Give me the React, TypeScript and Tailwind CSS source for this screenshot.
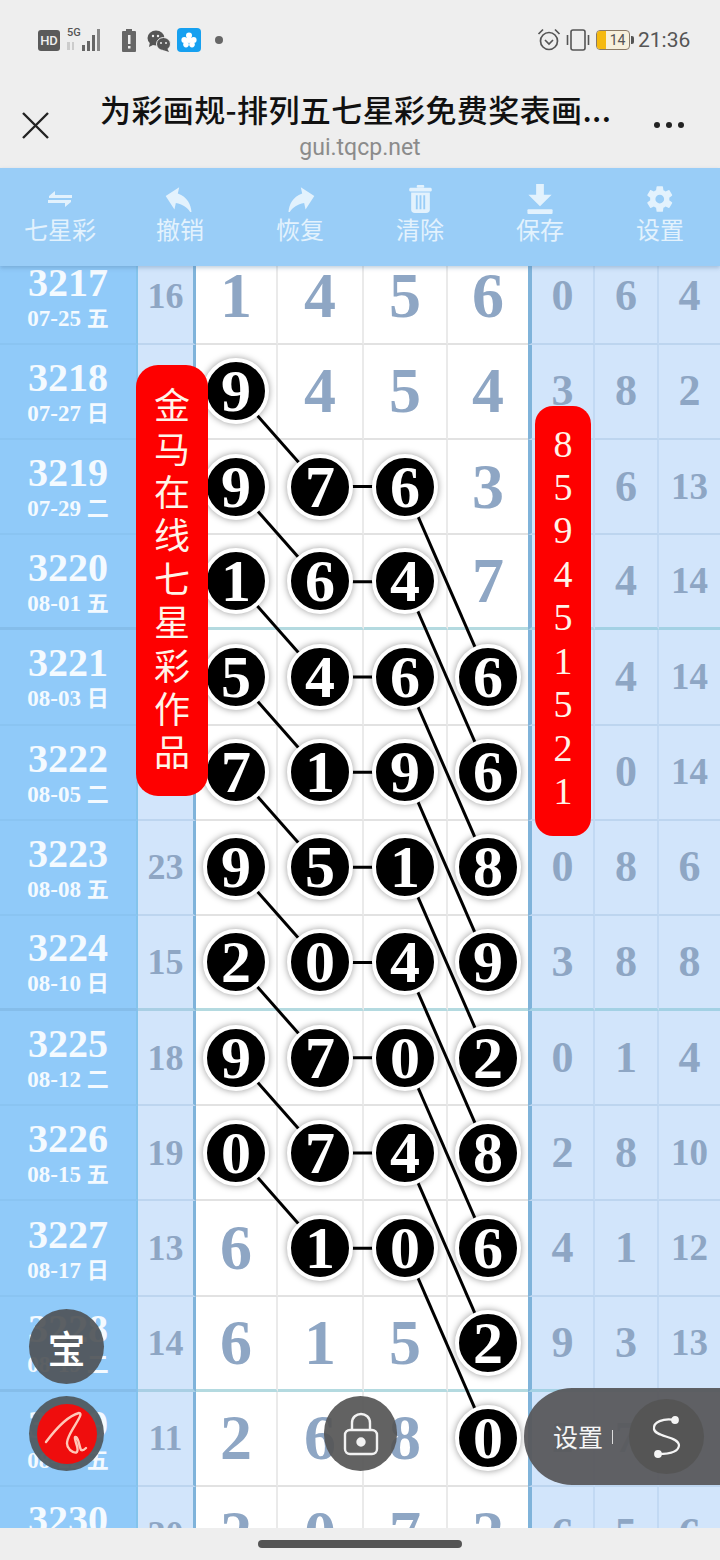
import { Fragment } from 'react'

const WEEK_ROWS = [
  { no: '3217', date: '07-25', day: '五', count: '16', main: [1, 4, 5, 6], right: ['0', '6', '4'] },
  { no: '3218', date: '07-27', day: '日', count: '', main: ['b9', 4, 5, 4], right: ['3', '8', '2'] },
  { no: '3219', date: '07-29', day: '二', count: '', main: ['b9', 'b7', 'b6', 3], right: ['', '6', '13'] },
  { no: '3220', date: '08-01', day: '五', count: '', main: ['b1', 'b6', 'b4', 7], right: ['', '4', '14'], thick: true },
  { no: '3221', date: '08-03', day: '日', count: '', main: ['b5', 'b4', 'b6', 'b6'], right: ['', '4', '14'] },
  { no: '3222', date: '08-05', day: '二', count: '', main: ['b7', 'b1', 'b9', 'b6'], right: ['', '0', '14'] },
  { no: '3223', date: '08-08', day: '五', count: '23', main: ['b9', 'b5', 'b1', 'b8'], right: ['0', '8', '6'] },
  { no: '3224', date: '08-10', day: '日', count: '15', main: ['b2', 'b0', 'b4', 'b9'], right: ['3', '8', '8'], thick: true },
  { no: '3225', date: '08-12', day: '二', count: '18', main: ['b9', 'b7', 'b0', 'b2'], right: ['0', '1', '4'] },
  { no: '3226', date: '08-15', day: '五', count: '19', main: ['b0', 'b7', 'b4', 'b8'], right: ['2', '8', '10'] },
  { no: '3227', date: '08-17', day: '日', count: '13', main: [6, 'b1', 'b0', 'b6'], right: ['4', '1', '12'] },
  { no: '3228', date: '08-19', day: '二', count: '14', main: [6, 1, 5, 'b2'], right: ['9', '3', '13'], thick: true },
  { no: '3229', date: '08-22', day: '五', count: '11', main: [2, 6, 8, 'b0'], right: ['2', '7', '9'] },
  { no: '3230', date: '08-24', day: '日', count: '20', main: [2, 0, 7, 2], right: ['6', '5', '6'] },
]

const COLS = [236, 320, 405, 488]
// y of the ball centres, measured from the top of the table
const rowY = (i: number) => 125.35 + (i - 1) * 95.2

function Ball({ n }: { n: string }) {
  return (
    <div className="relative z-20 flex h-[66px] w-[66px] items-center justify-center rounded-full border-[4px] border-white bg-black text-[60px] font-bold leading-none text-white shadow-[0_0_7px_rgba(0,0,0,0.4)]">
      {n}
    </div>
  )
}

function Lines() {
  const segs: number[][] = []
  for (let i = 1; i <= 9; i++) segs.push([COLS[0], rowY(i), COLS[1], rowY(i + 1)])
  for (let i = 2; i <= 10; i++) segs.push([COLS[1], rowY(i), COLS[2], rowY(i)])
  for (let i = 2; i <= 10; i++) segs.push([COLS[2], rowY(i), COLS[3], rowY(i + 2)])
  return (
    <svg className="absolute left-0 top-0 z-10" width="720" height="1340">
      {segs.map((s, i) => (
        <line key={i} x1={s[0]} y1={s[1]} x2={s[2]} y2={s[3]} stroke="#000" strokeWidth="3" />
      ))}
    </svg>
  )
}

function StatusBar() {
  return (
    <div className="relative h-[72px]">
      <div className="absolute left-[38px] top-[30px] flex h-[21px] w-[22px] items-center justify-center rounded-[3px] bg-[#5a5a5a] font-['Roboto',sans-serif] text-[13px] font-medium leading-none text-[#eee]">HD</div>
      <div className="absolute left-[67px] top-[27px] font-['Roboto',sans-serif] text-[11px] font-medium leading-none text-[#555]">5G</div>
      <svg className="absolute left-[66px] top-[28px]" width="40" height="24" fill="#666">
        <rect x="1" y="14" width="3" height="8" fill="#ccc" />
        <rect x="6" y="14" width="2" height="8" fill="#ccc" />
        <rect x="16" y="17" width="3" height="6" />
        <rect x="21" y="13" width="3" height="10" />
        <rect x="26" y="7" width="3" height="16" />
        <rect x="31" y="1" width="3" height="22" fill="#888" />
      </svg>
      <svg className="absolute left-[122px] top-[29px]" width="14" height="23">
        <rect x="4" y="0" width="6" height="2" fill="#666" />
        <rect x="0" y="2" width="14" height="21" rx="1" fill="#666" />
        <rect x="6" y="6" width="2.5" height="9" fill="#eee" />
        <rect x="6" y="17" width="2.5" height="2.5" fill="#eee" />
      </svg>
      <svg className="absolute left-[147px] top-[30px]" width="24" height="22" fill="#555">
        <ellipse cx="9" cy="8" rx="8.5" ry="7.5" />
        <path d="M3 12 L2 17 L8 14Z" />
        <ellipse cx="16.5" cy="14" rx="7" ry="6.5" stroke="#eee" strokeWidth="1" />
        <path d="M20 18 L22 22 L16 20Z" />
        <circle cx="6" cy="6" r="1.2" fill="#eee" />
        <circle cx="11" cy="6" r="1.2" fill="#eee" />
        <circle cx="14" cy="13" r="1" fill="#eee" />
        <circle cx="19" cy="13" r="1" fill="#eee" />
      </svg>
      <div className="absolute left-[177px] top-[28px] flex h-[24px] w-[24px] items-center justify-center rounded-[4px] bg-[#16a0f0]">
        <svg width="16" height="16" viewBox="0 0 16 16" fill="#fff">
          <circle cx="8" cy="3.6" r="3" />
          <circle cx="3.4" cy="8" r="3" />
          <circle cx="12.6" cy="8" r="3" />
          <circle cx="5" cy="12.6" r="2.8" />
          <circle cx="11" cy="12.6" r="2.8" />
          <circle cx="8" cy="8" r="3" />
        </svg>
      </div>
      <div className="absolute left-[215px] top-[36px] h-[8px] w-[8px] rounded-full bg-[#666]" />

      <svg className="absolute left-[537px] top-[27px]" width="24" height="26" fill="none" stroke="#555" strokeWidth="1.7">
        <circle cx="12" cy="14" r="8.5" />
        <path d="M8 13 L12 17 L16 13" />
        <path d="M1.5 7 L6 2.5 M22.5 7 L18 2.5" />
      </svg>
      <svg className="absolute left-[565px] top-[29px]" width="26" height="22" fill="none" stroke="#555" strokeWidth="1.6">
        <rect x="6" y="1" width="14" height="20" rx="2" />
        <path d="M2.5 6 V16 M23.5 6 V16" />
      </svg>
      <div className="absolute left-[596px] top-[30px] flex h-[20px] w-[34px] items-center overflow-hidden rounded-[4px] border border-[#8a7a66] bg-[#f7f0dc]">
        <div className="h-full w-[9px] bg-[#f5b90f]" />
        <div className="flex-1 text-center font-['Roboto',sans-serif] text-[14px] leading-none text-[#555]">14</div>
      </div>
      <div className="absolute left-[631px] top-[36px] h-[8px] w-[3px] rounded-r-[2px] bg-[#555]" />
      <div className="absolute left-[638px] top-[28px] font-['Roboto',sans-serif] text-[21px] leading-[25px] text-[#555]">21:36</div>
    </div>
  )
}

function TitleBar() {
  return (
    <div className="relative h-[96px]">
      <svg className="absolute left-[22px] top-[40px]" width="27" height="27" stroke="#222" strokeWidth="2.4">
        <path d="M1 1 L26 26 M26 1 L1 26" />
      </svg>
      <div className="absolute left-[100px] top-[17px] w-[530px] whitespace-nowrap font-['Noto_Sans_CJK_SC',sans-serif] text-[31px] font-medium leading-[40px] tracking-[0.4px] text-[#111]">
        为彩画规-排列五七星彩免费奖表画...
      </div>
      <div className="absolute left-0 top-[61px] w-full text-center font-['Roboto',sans-serif] text-[23px] leading-[30px] text-[#8b8b8b]">
        gui.tqcp.net
      </div>
      <div className="absolute left-[654px] top-[50px] flex gap-[6px]">
        <span className="h-[6px] w-[6px] rounded-full bg-[#222]" />
        <span className="h-[6px] w-[6px] rounded-full bg-[#222]" />
        <span className="h-[6px] w-[6px] rounded-full bg-[#222]" />
      </div>
    </div>
  )
}

const TOOLS: { label: string; icon: React.ReactNode }[] = [
  {
    label: '七星彩',
    icon: (
      <svg width="24" height="16" viewBox="0 0 24 16" fill="#e3f2fd">
        <path d="M7 0 L1 5 V7 H24 V4 H7Z" />
        <path d="M17 16 L23 11 V9 H0 V12 H17Z" />
      </svg>
    ),
  },
  {
    label: '撤销',
    icon: (
      <svg width="32" height="26" viewBox="3 4 18 16" fill="#e3f2fd">
        <path d="M10 9V5l-7 7 7 7v-4.1c5 0 8.5 1.6 11 5.1-1-5-4-10-11-11z" transform="rotate(12 12 12)" />
      </svg>
    ),
  },
  {
    label: '恢复',
    icon: (
      <svg width="32" height="26" viewBox="3 4 18 16" fill="#e3f2fd">
        <path d="M14 9V5l7 7-7 7v-4.1c-5 0-8.5 1.6-11 5.1 1-5 4-10 11-11z" transform="rotate(-12 12 12)" />
      </svg>
    ),
  },
  {
    label: '清除',
    icon: (
      <svg width="25" height="28" viewBox="0 0 24 30" fill="#e3f2fd">
        <rect x="8" y="0" width="8" height="3" rx="1" />
        <rect x="0" y="3" width="24" height="4" rx="1.5" />
        <path d="M2 8 H22 V26 Q22 30 18 30 H6 Q2 30 2 26Z" />
        <rect x="7" y="11" width="2" height="15" fill="#99cdf7" />
        <rect x="11" y="11" width="2" height="15" fill="#99cdf7" />
        <rect x="15" y="11" width="2" height="15" fill="#99cdf7" />
      </svg>
    ),
  },
  {
    label: '保存',
    icon: (
      <svg width="28" height="30" viewBox="0 0 28 31" fill="#e3f2fd">
        <path d="M10 0 H18 V11 H26 L14 23 L2 11 H10Z" />
        <rect x="1" y="26" width="26" height="5" rx="1" />
      </svg>
    ),
  },
  {
    label: '设置',
    icon: (
      <svg width="30" height="30" viewBox="0 0 24 24" fill="#e3f2fd">
        <path
          fillRule="evenodd"
          d="M19.4 13c.04-.32.06-.66.06-1s-.02-.68-.07-1l2.17-1.69c.2-.15.25-.42.13-.64l-2.05-3.55c-.13-.23-.39-.3-.62-.23l-2.55 1.03c-.53-.41-1.1-.74-1.73-1L14.35 2.2c-.04-.24-.25-.42-.5-.42h-4.1c-.25 0-.46.18-.5.42l-.39 2.71c-.62.26-1.2.6-1.73 1L4.58 4.88c-.23-.08-.49 0-.62.23L1.91 8.66c-.13.22-.07.49.13.64L4.2 11c-.05.32-.08.66-.08 1s.03.68.08 1l-2.16 1.69c-.2.15-.26.42-.13.64l2.05 3.55c.13.23.39.3.62.23l2.55-1.03c.53.41 1.1.74 1.73 1l.39 2.71c.04.24.25.42.5.42h4.1c.25 0 .46-.18.5-.42l.39-2.71c.62-.26 1.2-.6 1.73-1l2.55 1.03c.23.08.49 0 .62-.23l2.05-3.55c.12-.22.07-.49-.13-.64L19.4 13zM11.8 15.5a3.5 3.5 0 1 1 0-7 3.5 3.5 0 0 1 0 7z"
        />
      </svg>
    ),
  },
]

function Toolbar() {
  return (
    <div className="relative z-30 grid h-[98px] grid-cols-6 bg-[#99cdf7] shadow-[0_2px_4px_rgba(80,120,160,0.35)]">
      {TOOLS.map((t) => (
        <div key={t.label} className="flex flex-col items-center pt-[15px]">
          <div className="flex h-[32px] items-center justify-center">{t.icon}</div>
          <div className="font-['Noto_Sans_CJK_SC',sans-serif] text-[24px] leading-[28px] text-[#e3f2fd]">{t.label}</div>
        </div>
      ))}
    </div>
  )
}

function Table() {
  return (
    <div className="relative h-[1262px] overflow-hidden font-['Liberation_Serif','Noto_Sans_CJK_SC',serif] font-bold">
      <div className="mt-[-16.45px] grid grid-cols-[138px_58px_82px_86px_84px_80px_67px_64px_61px]">
        {WEEK_ROWS.map((r) => {
          const line = r.thick ? 'border-b-[3px]' : 'border-b-2'
          return (
            <Fragment key={r.no}>
              <div className={`flex h-[95.2px] flex-col items-center justify-center border-r-2 border-r-[#84c4ec] bg-[#90caf9] pt-[2px] text-[#f4faff] ${line} ${r.thick ? 'border-b-[#85bdea]' : 'border-b-[#8ac4f2]'}`}>
                <div className="text-[40px] leading-[42px]">{r.no}</div>
                <div className="mt-[1px] whitespace-nowrap text-[23px] leading-[28px]">
                  {r.date} <span className="text-[22px]">{r.day}</span>
                </div>
              </div>
              <div className={`flex h-[95.2px] items-center justify-center border-r-[3px] border-r-[#7fb3da] bg-[#d2e5fb] text-[36px] text-[#8ea6c4] ${line} ${r.thick ? 'border-b-[#a9cfe4]' : 'border-b-[#bdd5ef]'}`}>
                {r.count}
              </div>
              {r.main.map((m, j) => (
                <div
                  key={j}
                  className={`flex h-[95.2px] items-center justify-center bg-white text-[64px] text-[#8ea6c4] ${line} ${j < 3 ? 'border-r-2 border-r-[#eaeaea]' : ''} ${r.thick ? 'border-b-[#b4dae0]' : 'border-b-[#e2e2e2]'}`}
                >
                  {typeof m === 'string' ? <Ball n={m.slice(1)} /> : m}
                </div>
              ))}
              {r.right.map((v, j) => (
                <div
                  key={j}
                  className={`flex h-[95.2px] items-center justify-center bg-[#d2e5fb] text-[#8ea6c4] ${v.length > 1 ? 'text-[37px]' : 'text-[44px]'} ${j === 0 ? 'border-l-4 border-l-[#7fb3da]' : ''} ${j < 2 ? 'border-r-2 border-r-[#c2d9f3]' : ''} ${line} ${r.thick ? 'border-b-[#a3d1e4]' : 'border-b-[#bdd5ef]'}`}
                >
                  {v}
                </div>
              ))}
            </Fragment>
          )
        })}
      </div>
      <Lines />

      {/* floating label, left */}
      <div className="absolute left-[136px] top-[99px] z-30 flex h-[431px] w-[72px] flex-col items-center justify-center rounded-[22px] bg-[#fe0000] pb-[6px] font-['Noto_Sans_CJK_SC',sans-serif] text-[36px] font-normal leading-[43.4px] text-[#fff4e8]">
        {'金马在线七星彩作品'.split('').map((c, i) => (
          <span key={i}>{c}</span>
        ))}
      </div>
      {/* floating label, right */}
      <div className="absolute left-[535px] top-[140px] z-30 flex h-[430px] w-[56px] flex-col items-center justify-center rounded-[18px] bg-[#fe0000] pb-[6px] text-[38px] font-normal leading-[43.4px] text-[#fff4e8]">
        {'859451521'.split('').map((c, i) => (
          <span key={i}>{c}</span>
        ))}
      </div>

      {/* floating buttons */}
      <div className="absolute left-[29px] top-[1043px] z-30 flex h-[75px] w-[75px] items-center justify-center rounded-full bg-[rgba(80,84,88,0.93)] font-['Noto_Sans_CJK_SC',sans-serif] text-[38px] font-medium text-white">
        宝
      </div>
      <div className="absolute left-[29px] top-[1130px] z-30 flex h-[75px] w-[75px] items-center justify-center rounded-full bg-[rgba(80,90,96,0.95)]">
        <div className="flex h-[60px] w-[60px] items-center justify-center rounded-full bg-[#ef0d0d]">
          <svg width="60" height="60" viewBox="0 0 60 60" fill="none" stroke="#ffc8b8" strokeWidth="2.4" strokeLinecap="round" strokeLinejoin="round">
            <path d="M9 38 C18 26 30 12 42 9 C47 9 38 20 33 30 C29 38 29 42 33 46 C38 50 42 50 40 42 C38 36 37 32 39 33 C42 35 42 42 44 46 C46 47 48 45 49 44" />
          </svg>
        </div>
      </div>
      <div className="absolute left-[324px] top-[1130px] z-30 flex h-[75px] w-[73px] items-center justify-center rounded-full bg-[rgba(85,85,85,0.92)]">
        <svg width="36" height="44" viewBox="0 0 36 44" fill="none" stroke="#f2f2f2" strokeWidth="2.4">
          <rect x="2" y="18" width="32" height="24" rx="5" />
          <path d="M9 18 V11 C9 -1 27 -1 27 11 V18" />
          <circle cx="18" cy="30" r="3.5" fill="#f2f2f2" />
        </svg>
      </div>
      <div className="absolute left-[524px] top-[1122px] z-30 flex h-[97px] w-[196px] items-center rounded-l-[48px] bg-[rgba(88,88,92,0.95)]">
        <span className="ml-[29px] font-['Noto_Sans_CJK_SC',sans-serif] text-[25px] font-normal leading-none text-[#f5f5f5]">设置</span>
        <span className="ml-[9px] h-[14px] w-[1px] bg-[#ddd]" />
        <div className="ml-[16px] flex h-[75px] w-[75px] items-center justify-center rounded-full bg-[#555]">
          <svg width="32" height="42" viewBox="0 0 32 42" fill="none" stroke="#f5f5f5" strokeWidth="2.2" strokeLinecap="round">
            <path d="M24 4 C12 2 2 6 3 13 C4 21 27 20 28 29 C28 36 18 38 7 38" />
            <circle cx="24" cy="4" r="2.8" fill="#f5f5f5" />
            <circle cx="7" cy="38" r="2.8" fill="#f5f5f5" />
          </svg>
        </div>
      </div>
    </div>
  )
}

export default function App() {
  return (
    <div className="h-[1560px] w-[720px] overflow-hidden bg-[#eeeeee]">
      <StatusBar />
      <TitleBar />
      <Toolbar />
      <Table />
      <div className="flex h-[32px] items-center justify-center bg-[#eeeeee]">
        <div className="h-[8px] w-[204px] rounded-full bg-[#555]" />
      </div>
    </div>
  )
}
